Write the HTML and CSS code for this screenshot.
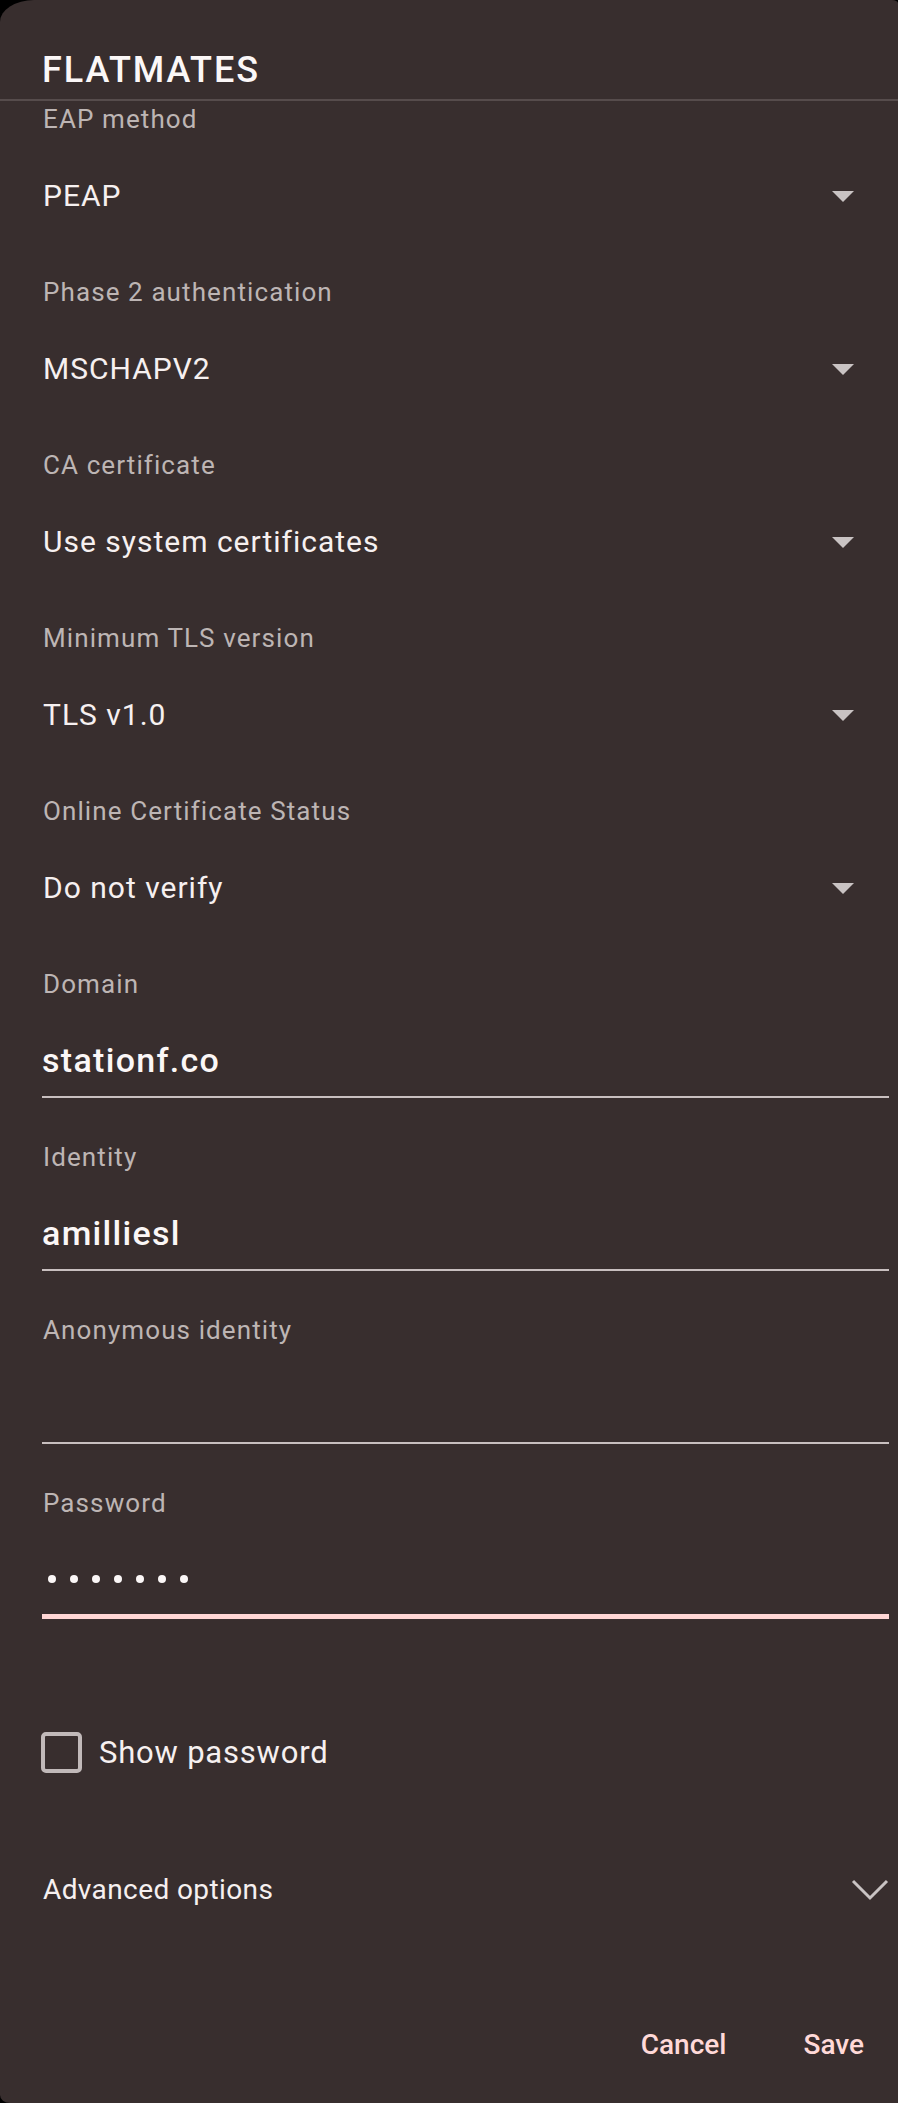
FILE: index.html
```html
<!DOCTYPE html>
<html>
<head>
<meta charset="utf-8">
<link rel="stylesheet" href="styles.css">
</head>
<body>
<div class="dialog">
  <header class="header">
    <h1 class="title">FLATMATES</h1>
  </header>
  <div class="content">
    <div class="field">
      <div class="label">EAP method</div>
      <div class="select-row"><span class="value">PEAP</span><span class="arrow"></span></div>
    </div>
    <div class="field">
      <div class="label">Phase 2 authentication</div>
      <div class="select-row"><span class="value">MSCHAPV2</span><span class="arrow"></span></div>
    </div>
    <div class="field">
      <div class="label">CA certificate</div>
      <div class="select-row"><span class="value">Use system certificates</span><span class="arrow"></span></div>
    </div>
    <div class="field">
      <div class="label">Minimum TLS version</div>
      <div class="select-row"><span class="value">TLS v1.0</span><span class="arrow"></span></div>
    </div>
    <div class="field">
      <div class="label">Online Certificate Status</div>
      <div class="select-row"><span class="value">Do not verify</span><span class="arrow"></span></div>
    </div>
    <div class="field">
      <div class="label">Domain</div>
      <div class="input-value">stationf.co</div>
      <div class="underline"></div>
    </div>
    <div class="field">
      <div class="label">Identity</div>
      <div class="input-value">amilliesl</div>
      <div class="underline"></div>
    </div>
    <div class="field">
      <div class="label">Anonymous identity</div>
      <div class="input-value"></div>
      <div class="underline"></div>
    </div>
    <div class="field">
      <div class="label">Password</div>
      <div class="dots"><span></span><span></span><span></span><span></span><span></span><span></span><span></span></div>
      <div class="underline focused"></div>
    </div>
    <div class="check-row">
      <span class="checkbox"></span>
      <span class="check-label">Show password</span>
    </div>
    <div class="advanced-row">
      <span class="advanced-label">Advanced options</span>
      <svg class="chevron" width="38" height="22" viewBox="0 0 38 22"><polyline points="2,2 19,19 36,2" fill="none" stroke="#c9c3c3" stroke-width="3"/></svg>
    </div>
  </div>
  <footer class="actions">
    <span class="btn">Cancel</span>
    <span class="btn">Save</span>
  </footer>
</div>
</body>
</html>
```

FILE: styles.css
```css
html, body {
  margin: 0;
  padding: 0;
  background: #000;
}
body {
  font-family: Roboto, "Noto Sans", sans-serif;
  width: 898px;
  height: 2103px;
  overflow: hidden;
}
.dialog {
  background: #382e2e;
  height: 2103px;
  border-top-left-radius: 34px 22px;
  border-top-right-radius: 6px 3px;
  border-bottom-left-radius: 10px 8px;
  display: flex;
  flex-direction: column;
}
.header {
  padding: 48px 0 7px 42px;
  border-bottom: 2px solid #564c4c;
}
.title {
  margin: 0;
  font-size: 36px;
  line-height: 44px;
  font-weight: 500;
  color: #fbf7f7;
  letter-spacing: 1.9px;
}
.content {
  padding: 3px 9px 0 42px;
  display: flex;
  flex-direction: column;
}
.field {
  height: 173px;
  display: flex;
  flex-direction: column;
}
.label {
  font-size: 26px;
  line-height: 30px;
  color: #bdb5b4;
  padding-left: 1px;
  letter-spacing: 1.1px;
}
.select-row {
  margin-top: 44px;
  display: flex;
  align-items: center;
  justify-content: space-between;
  padding-right: 35px;
  height: 36px;
}
.value {
  font-size: 30px;
  line-height: 36px;
  color: #f6f0f0;
  padding-left: 1px;
  letter-spacing: 1px;
}
.arrow {
  width: 0;
  height: 0;
  border-left: 11px solid transparent;
  border-right: 11px solid transparent;
  border-top: 11px solid #c9c3c3;
}
.input-value {
  margin-top: 41px;
  font-size: 34px;
  line-height: 40px;
  height: 40px;
  font-weight: 500;
  color: #fbf7f7;
  letter-spacing: 1.3px;
}
.underline {
  margin-top: 16px;
  height: 2px;
  background: #c8bfbf;
}
.underline.focused {
  height: 5px;
  margin-top: 15px;
  background: #ffd6d5;
}
.dots {
  margin-top: 41px;
  height: 40px;
  display: flex;
  align-items: center;
  gap: 14px;
  padding-left: 6px;
}
.dots span {
  width: 8px;
  height: 8px;
  border-radius: 50%;
  background: #fbf7f7;
}
.check-row {
  margin-top: 71px;
  display: flex;
  align-items: center;
  gap: 17px;
  margin-left: -1px;
}
.checkbox {
  width: 33px;
  height: 33px;
  border: 4px solid #c1b9b9;
  border-radius: 5px;
}
.check-label {
  font-size: 31px;
  color: #f6f0f0;
  letter-spacing: 0.8px;
}
.advanced-row {
  margin-top: 99px;
  display: flex;
  align-items: center;
  justify-content: space-between;
}
.advanced-label {
  font-size: 28px;
  line-height: 36px;
  color: #f6f0f0;
  padding-left: 1px;
  letter-spacing: 0.4px;
}
.chevron {
  display: block;
  margin-right: 0;
}
.actions {
  margin-top: auto;
  display: flex;
  justify-content: flex-end;
  gap: 77px;
  padding: 0 34px 40px 0;
}
.btn {
  font-size: 28px;
  line-height: 36px;
  font-weight: 500;
  color: #ffd9d8;
}
```
